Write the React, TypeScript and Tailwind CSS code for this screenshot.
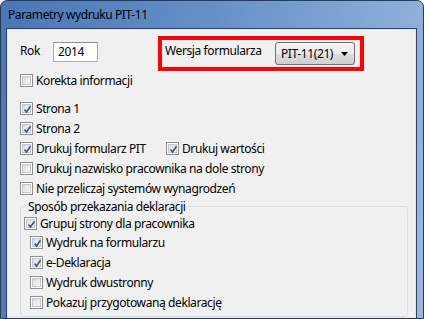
import type { ReactNode } from 'react'

const FONT = { fontFamily: '"Noto Sans", "Open Sans", sans-serif' }

function Check({ checked }: { checked?: boolean }) {
  return (
    <span className="relative flex h-[13px] w-[13px] shrink-0 items-center justify-center border border-[#8f8f8f] bg-white p-[1px]">
      <span className="h-full w-full border border-[#c4c7cb] bg-[linear-gradient(135deg,#d9dcdf,#f6f6f6)]" />
      {checked && (
        <svg viewBox="0 0 13 13" className="absolute left-0 top-0 h-[13px] w-[13px]" aria-hidden="true">
          <path d="M3.5 6.5 L5.5 9 L9.5 3.2" fill="none" stroke="#3b5a98" strokeWidth="1.7" />
        </svg>
      )}
    </span>
  )
}

function Row({ checked, children, className = 'h-[20px]' }: { checked?: boolean; children: ReactNode; className?: string }) {
  return (
    <div className={`flex items-start gap-[3px] ${className}`}>
      <span className="mt-[3px]">
        <Check checked={checked} />
      </span>
      <span className="leading-[19px]">{children}</span>
    </div>
  )
}

export default function App() {
  return (
    <div
      className="flex h-[319px] w-[424px] flex-col overflow-hidden rounded-t-[7px] border border-[#2a3a52] bg-[linear-gradient(100deg,#4a77b5_0%,#6590c7_45%,#9ab8df_100%)] text-[12px] tracking-[-0.4px] text-black"
      style={FONT}
    >
      <div className="flex h-[28px] shrink-0 items-center pl-[7px] pb-[1px] text-[12px] tracking-[-0.4px]">Parametry wydruku PIT-11</div>
      <div className="ml-[6px] mr-[7px] flex-1 border border-[#dfe7f0] bg-[#f0f0f0] shadow-[0_0_0_1px_#2d4263]">
        <div className="flex flex-col pl-[12px] pt-[6px]">
          <div className="flex h-[35px] items-start">
            <span className="mt-[7px] w-[33px] leading-[16px]">Rok</span>
            <span className="mt-[6px] flex h-[20px] w-[45px] items-center border border-[#abadb3] border-t-[#8e9096] bg-white pl-[4px]">
              2014
            </span>
            <div className="ml-[60px] flex h-[35px] w-[206px] items-start border-4 border-[#ff0000] pl-[3px]">
              <span className="mt-[3px] w-[110px] leading-[16px]">Wersja formularza</span>
              <span className="mt-[2px] flex h-[23px] w-[80px] items-center justify-between rounded-[3px] border border-[#707070] bg-[linear-gradient(#f2f2f2,#ebebeb_50%,#dddddd_51%,#cfcfcf)] pl-[5px] pr-[6px]">
                <span>PIT-11(21)</span>
                <svg viewBox="0 0 7 4" className="h-[4px] w-[7px]" aria-hidden="true">
                  <path d="M0 0 H7 L3.5 4 Z" fill="#000" />
                </svg>
              </span>
            </div>
          </div>
          <Row>Korekta informacji</Row>
          <div className="h-[8px]" />
          <Row checked>Strona 1</Row>
          <Row checked>Strona 2</Row>
          <div className="flex">
            <div className="w-[146px]">
              <Row checked>Drukuj formularz PIT</Row>
            </div>
            <Row checked>Drukuj wartości</Row>
          </div>
          <Row>Drukuj nazwisko pracownika na dole strony</Row>
          <Row>Nie przeliczaj systemów wynagrodzeń</Row>
          <fieldset className="mr-[7px] rounded-[3px] border border-[#d5dfe5] px-[3px] pb-[3px]">
            <legend className="ml-[2px] px-[2px] leading-[15px]">Sposób przekazania deklaracji</legend>
            <Row checked className="h-[19px]">
              Grupuj strony dla pracownika
            </Row>
            <div className="flex flex-col pl-[6px]">
              <Row checked>Wydruk na formularzu</Row>
              <Row checked>e-Deklaracja</Row>
              <Row>Wydruk dwustronny</Row>
              <Row>Pokazuj przygotowaną deklarację</Row>
            </div>
          </fieldset>
        </div>
      </div>
    </div>
  )
}
